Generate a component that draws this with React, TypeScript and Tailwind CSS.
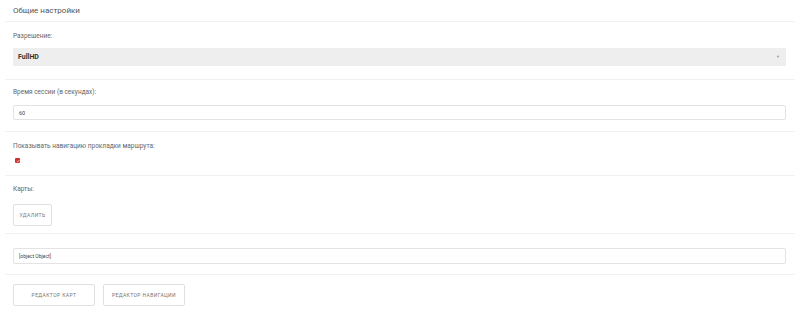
import React from 'react';

const Section: React.FC<{ children: React.ReactNode; last?: boolean }> = ({ children, last }) => (
  <div className={`pl-2 pr-[9px] ${last ? '' : 'border-b border-[#f2f2f2]'}`}>{children}</div>
);

const Label: React.FC<{ children: React.ReactNode }> = ({ children }) => (
  <div className="text-[6.5px] leading-[8px] text-[#666]">{children}</div>
);

const App: React.FC = () => {
  return (
    <div className="w-[800px] h-[312px] bg-white px-[5px] text-[#555] font-['Roboto',sans-serif]">
      {/* Header */}
      <div className="h-[22px] border-b border-[#f2f2f2] pl-2 flex items-center">
        <span className="text-[8px] leading-[10px] text-[#555]">Общие настройки</span>
      </div>

      {/* Resolution */}
      <Section>
        <div className="h-[57px] pt-[10px]">
          <Label>Разрешение:</Label>
          <div className="mt-[8px] h-[18px] bg-[#eeeeee] rounded-[1px] flex items-center justify-between pl-[5px] pr-[6px]">
            <span className="text-[7px] leading-[8px] font-bold text-[#333]">FullHD</span>
            <span className="text-[4px] leading-[4px] text-[#999]">▼</span>
          </div>
        </div>
      </Section>

      {/* Session time */}
      <Section>
        <div className="h-[51px] pt-[8px]">
          <Label>Время сессии (в секундах):</Label>
          <div className="mt-[9px] h-[15px] border border-[#e3e3e3] rounded-[2px] flex items-center pl-[5px]">
            <span className="text-[5.5px] leading-[6px] text-[#444]">60</span>
          </div>
        </div>
      </Section>

      {/* Navigation */}
      <Section>
        <div className="h-[43px] pt-[10px]">
          <Label>Показывать навигацию прокладки маршрута:</Label>
          <div className="mt-[8px] pl-[2px]">
            <div className="w-[5px] h-[5px] bg-[#d32f2f] rounded-[1px] flex items-center justify-center">
              <svg viewBox="0 0 6 6" className="w-[4px] h-[4px]">
                <path d="M1 3.2 L2.5 4.5 L5 1.5" stroke="white" strokeWidth="1" fill="none" />
              </svg>
            </div>
          </div>
        </div>
      </Section>

      {/* Maps */}
      <Section>
        <div className="h-[57px] pt-[9px]">
          <Label>Карты:</Label>
          <button className="mt-[11px] h-[22px] w-[39px] border border-[#e0e0e0] rounded-[2px] bg-white text-[5px] leading-[6px] tracking-[0.4px] text-[#777]">
            УДАЛИТЬ
          </button>
        </div>
      </Section>

      <Section>
        <div className="h-[40px] pt-[14px]">
          <div className="h-[16px] border border-[#e3e3e3] rounded-[2px] flex items-center pl-[5px]">
            <span className="text-[5px] leading-[6px] text-[#444]">[object Object]</span>
          </div>
        </div>
      </Section>

      {/* Editors */}
      <Section last>
        <div className="pt-[9px] flex gap-2">
          <button className="w-[82px] h-[22px] border border-[#e0e0e0] rounded-[2px] bg-white text-[5px] leading-[6px] tracking-[0.4px] text-[#777]">
            РЕДАКТОР КАРТ
          </button>
          <button className="w-[82px] h-[22px] border border-[#e0e0e0] rounded-[2px] bg-white text-[5px] leading-[6px] tracking-[0.4px] text-[#777]">
            РЕДАКТОР НАВИГАЦИИ
          </button>
        </div>
      </Section>
    </div>
  );
};

export default App;
